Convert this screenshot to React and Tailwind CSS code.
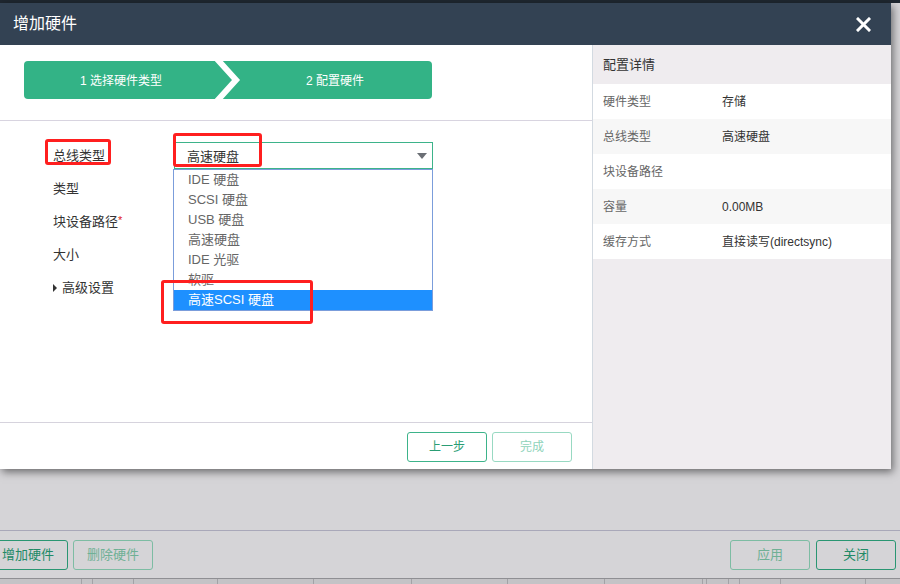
import React from "react";

const FONT = { fontFamily: '"Liberation Sans","Noto Sans CJK SC",sans-serif' };

const options = ["IDE 硬盘", "SCSI 硬盘", "USB 硬盘", "高速硬盘", "IDE 光驱", "软驱", "高速SCSI 硬盘"];

const details = [
  ["硬件类型", "存储"],
  ["总线类型", "高速硬盘"],
  ["块设备路径", ""],
  ["容量", "0.00MB"],
  ["缓存方式", "直接读写(directsync)"],
];

const colLines = [81, 92, 133, 217, 313, 411, 507, 604, 702, 706, 728, 739, 780, 865];

export default function App() {
  return (
    <div className="relative w-[900px] h-[584px] overflow-hidden bg-[#d5d4d7] flex flex-col" style={FONT}>
      {/* underlying page */}
      <div className="h-[3px] bg-[#1f2730] shrink-0" />
      <div className="flex-1" />
      <div className="h-[48px] shrink-0 border-t border-[#a9a8b9] flex items-start justify-between pt-[9px] pr-[4px]">
        <div className="flex gap-[5px] -ml-[12px]">
          <button className="w-[80px] h-[30px] rounded-[3px] border border-[#2a9672] text-[13px] text-[#218a66] flex items-center justify-center">增加硬件</button>
          <button className="w-[80px] h-[30px] rounded-[3px] border border-[#7dbca3] text-[13px] text-[#6fb095] flex items-center justify-center">删除硬件</button>
        </div>
        <div className="flex gap-[6px]">
          <button className="w-[80px] h-[30px] rounded-[3px] border border-[#7dbca3] text-[13px] text-[#6fb095] flex items-center justify-center">应用</button>
          <button className="w-[80px] h-[30px] rounded-[3px] border border-[#2a9672] text-[13px] text-[#218a66] flex items-center justify-center">关闭</button>
        </div>
      </div>
      <div className="h-[6px] shrink-0 bg-[#c4c3c6] border-t border-[#8f8f93] flex">
        {colLines.map((x, i) => (
          <div key={i} className="absolute bottom-0 h-[5px] w-px bg-[#a3a2a6]" style={{ left: x }} />
        ))}
      </div>

      {/* dialog */}
      <div className="absolute left-0 top-[3px] w-[891px] h-[466px] bg-white flex flex-col shadow-[2px_3px_8px_rgba(0,0,0,0.5)]">
        <div className="h-[42px] shrink-0 bg-[#334253] flex items-center justify-between pl-[13px] pr-[20px]">
          <span className="text-[16px] text-white">增加硬件</span>
          <svg width="15" height="15" viewBox="0 0 15 15">
            <path d="M2 2 L13 13 M13 2 L2 13" stroke="#ffffff" strokeWidth="3" strokeLinecap="square" />
          </svg>
        </div>
        <div className="flex-1 flex min-h-0">
          {/* left */}
          <div className="w-[592px] shrink-0 flex flex-col">
            <div className="pt-[16px] pl-[24px] pb-[21px] border-b border-[#d8d4e0]">
              <div className="relative w-[408px] h-[38px] rounded-[4px] bg-[#33b386] flex text-[12px] text-white">
                <div className="w-[194px] flex items-center justify-center pt-px">1 选择硬件类型</div>
                <div className="flex-1 flex items-center justify-center pt-px pl-[20px]">2 配置硬件</div>
                <svg className="absolute left-[190px] top-0" width="30" height="38" viewBox="0 0 30 38">
                  <polyline points="3,-2 22,19 3,40" fill="none" stroke="#ffffff" strokeWidth="6" />
                </svg>
              </div>
            </div>
            <div className="flex-1 flex pt-[21px] pl-[53px]">
              <div className="w-[121px] flex flex-col gap-[6px] text-[13px] text-[#333]">
                <div className="h-[27px] flex items-center">总线类型</div>
                <div className="h-[27px] flex items-center">类型</div>
                <div className="h-[27px] flex items-center">块设备路径<span className="text-[#e02020] text-[11px] self-start mt-[4px]">*</span></div>
                <div className="h-[27px] flex items-center">大小</div>
                <div className="h-[27px] flex items-center gap-[5px]">
                  <svg width="4" height="8" viewBox="0 0 4 8"><path d="M0 0 L4 4 L0 8 Z" fill="#333" /></svg>
                  高级设置
                </div>
              </div>
              <div className="relative w-[259px] h-[27px]">
                <div className="h-[27px] border border-[#3db38a] flex items-center justify-between pl-[12px] pr-[5px] text-[13px] text-[#333]">
                  <span className="pt-[3px]">高速硬盘</span>
                  <svg width="10" height="6" viewBox="0 0 10 6"><path d="M0 0 L10 0 L5 6 Z" fill="#6b6f75" /></svg>
                </div>
                <div className="absolute left-[-1px] top-[27px] w-[260px] border border-[#7b9ddb] bg-white text-[13px] text-[#666]">
                  {options.map((o, i) => (
                    <div
                      key={o}
                      className={
                        "h-[20px] flex items-center pl-[14px] " +
                        (i === options.length - 1 ? "bg-[#1e90ff] text-white" : "")
                      }
                    >
                      {o}
                    </div>
                  ))}
                </div>
              </div>
            </div>
            <div className="h-[47px] shrink-0 border-t border-[#d6d3dd] flex justify-end items-start pt-[9px] pr-[20px] gap-[5px]">
              <button className="w-[80px] h-[30px] rounded-[3px] border border-[#3db38a] text-[12px] text-[#2a9d74] flex items-center justify-center">上一步</button>
              <button className="w-[80px] h-[30px] rounded-[3px] border border-[#98d9c2] text-[12px] text-[#8fd3ba] flex items-center justify-center">完成</button>
            </div>
          </div>
          {/* right */}
          <div className="flex-1 bg-[#efecef] border-l border-[#d3dae1] flex flex-col">
            <div className="h-[39px] flex items-center pl-[10px] text-[13px] text-[#333]">配置详情</div>
            {details.map(([k, v], i) => (
              <div key={k} className={"h-[35px] flex items-center pl-[10px] text-[12px] " + (i % 2 === 0 ? "bg-white" : "bg-[#f7f7f7]")}>
                <span className="w-[119px] text-[#666]">{k}</span>
                <span className="text-[#333]">{v}</span>
              </div>
            ))}
          </div>
        </div>
      </div>

      {/* annotation boxes */}
      <div className="absolute left-[45px] top-[139px] w-[66px] h-[26px] border-[3px] border-[#ff1f1f] rounded-[3px]" />
      <div className="absolute left-[173px] top-[133px] w-[89px] h-[34px] border-[3px] border-[#ff1f1f] rounded-[3px]" />
      <div className="absolute left-[161px] top-[280px] w-[152px] h-[44px] border-[3px] border-[#ff1f1f] rounded-[3px]" />
    </div>
  );
}
